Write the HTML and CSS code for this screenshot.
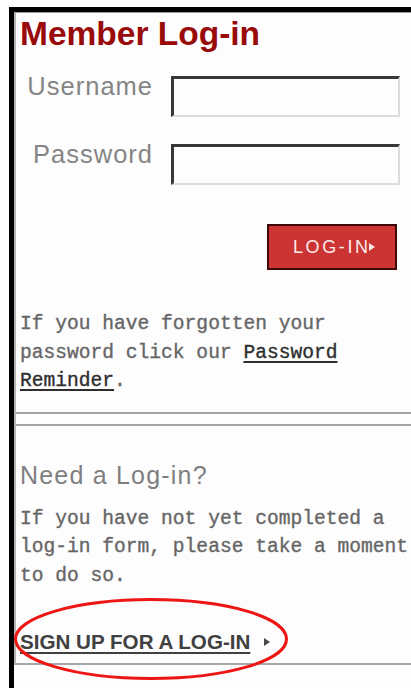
FILE: index.html
```html
<!DOCTYPE html>
<html lang="en">
<head>
<meta charset="utf-8">
<title>Member Log-in</title>
<link rel="stylesheet" href="styles.css">
</head>
<body>
<div class="frame">
  <div class="panel">
    <h1 class="title">Member Log-in</h1>
    <form class="login-form" onsubmit="return false">
      <label class="field-label" for="username">Username</label>
      <input class="field-input" id="username" type="text">
      <label class="field-label" for="password">Password</label>
      <input class="field-input" id="password" type="password">
      <button class="login-btn" type="submit">LOG-IN<span class="btn-arrow"></span></button>
    </form>
    <p class="copy copy-forgot">If you have forgotten your password click our <a href="#" class="copy-link">Password Reminder</a>.</p>
    <div class="divider"></div>
    <h2 class="subtitle">Need a Log-in?</h2>
    <p class="copy copy-signup">If you have not yet completed a log-in form, please take a moment to do so.</p>
    <div class="signup">
      <a href="#" class="signup-link">SIGN UP FOR A LOG-IN</a><span class="signup-arrow"></span>
      <svg class="signup-ring" width="282" height="86" viewBox="0 0 282 86" aria-hidden="true">
        <ellipse cx="137" cy="41" rx="135.5" ry="39.5" fill="none" stroke="#ee1515" stroke-width="3"/>
      </svg>
    </div>
  </div>
</div>
</body>
</html>
```

FILE: styles.css
```css
html, body {
  margin: 0;
  padding: 0;
  overflow: hidden;
  background: #fdfdfd;
}

.frame {
  margin: 7px 0 0 9px;
  border-top: 5px solid #000;
  border-left: 5px solid #000;
  min-height: 700px;
  width: 460px;
}

.panel {
  border-top: 1px solid #9a9a9a;
  border-left: 2px solid #b4b4b4;
  border-bottom: 2px solid #a8a8a8;
  padding: 3px 0 9px 4px;
}

.title {
  margin: 0;
  font-family: "Liberation Sans", Arial, sans-serif;
  font-size: 33.5px;
  line-height: 36px;
  font-weight: bold;
  color: #990a0a;
}

.login-form {
  margin: 24px 0 0;
  width: 380px;
  display: grid;
  grid-template-columns: 133px 229px;
  column-gap: 18px;
  row-gap: 27px;
  align-items: start;
}

.field-label {
  margin-top: -2px;
  text-align: right;
  font-family: "Liberation Sans", Arial, sans-serif;
  font-size: 25.5px;
  line-height: 25.5px;
  letter-spacing: 1px;
  color: #858585;
}

.field-input {
  box-sizing: border-box;
  width: 229px;
  height: 41px;
  margin: 0;
  padding: 0 4px;
  background: #fdfdfd;
  border-style: solid;
  border-width: 3px 2px 2px 3px;
  border-color: #383838 #dcdcdc #dcdcdc #383838;
  outline: none;
}

.login-btn {
  grid-column: 2;
  justify-self: end;
  margin: 12px 3px 0 0;
  box-sizing: border-box;
  width: 130px;
  height: 46px;
  padding: 0 0 0 24px;
  display: flex;
  align-items: center;
  background: #cc3333;
  border: 2px solid #3e0808;
  color: #fbeaea;
  font-family: "Liberation Sans", Arial, sans-serif;
  font-size: 18px;
  letter-spacing: 2.6px;
  cursor: pointer;
}

.btn-arrow {
  display: inline-block;
  width: 0;
  height: 0;
  margin-left: -2px;
  border-top: 4px solid transparent;
  border-bottom: 4px solid transparent;
  border-left: 6px solid #fbeaea;
}

.copy {
  width: 395px;
  margin: 0;
  font-family: "Liberation Mono", "Courier New", monospace;
  font-size: 19.6px;
  line-height: 28.5px;
  color: #666;
  -webkit-text-stroke: 0.35px #666;
}

.copy-forgot {
  margin-top: 40px;
}

.copy-link {
  color: #2e2e2e;
  -webkit-text-stroke: 0.35px #2e2e2e;
  text-decoration: underline;
  text-decoration-thickness: 2px;
  text-underline-offset: 3px;
}

.divider {
  margin: 16px 0 0 -4px;
  height: 10px;
  border-top: 2px solid #a4a4a4;
  border-bottom: 2px solid #a4a4a4;
}

.subtitle {
  margin: 34px 0 0;
  font-family: "Liberation Sans", Arial, sans-serif;
  font-size: 25px;
  line-height: 30px;
  font-weight: normal;
  letter-spacing: 1.2px;
  color: #7f7f7f;
}

.copy-signup {
  margin-top: 15px;
}

.signup {
  position: relative;
  margin-top: 40px;
  display: flex;
  align-items: center;
  height: 24px;
}

.signup-link {
  font-family: "Liberation Sans", Arial, sans-serif;
  font-size: 20.6px;
  line-height: 24px;
  font-weight: bold;
  color: #404040;
  text-decoration: underline;
  text-decoration-thickness: 2px;
  text-underline-offset: 3px;
}

.signup-arrow {
  display: inline-block;
  width: 0;
  height: 0;
  margin: 0 0 0 14px;
  border-top: 4px solid transparent;
  border-bottom: 4px solid transparent;
  border-left: 6px solid #4a4a4a;
}

.signup-ring {
  position: absolute;
  left: -6px;
  top: -32px;
  pointer-events: none;
}
```
